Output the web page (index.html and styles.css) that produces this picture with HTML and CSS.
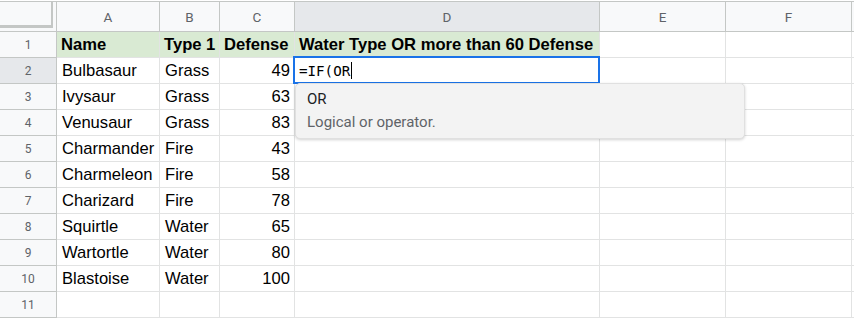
FILE: index.html
```html
<!DOCTYPE html>
<html>
<head>
<meta charset="utf-8">
<link rel="stylesheet" href="styles.css">
</head>
<body>
<div class="sheet">
  <div class="row head-row">
    <div class="corner"><span class="freeze-h"></span><span class="freeze-v"></span></div>
    <div class="colhead">A</div>
    <div class="colhead">B</div>
    <div class="colhead">C</div>
    <div class="colhead sel">D</div>
    <div class="colhead">E</div>
    <div class="colhead">F</div>
    <div class="colhead rest"></div>
  </div>
  <div class="row">
    <div class="rowhead">1</div>
    <div class="cell th">Name</div>
    <div class="cell th">Type 1</div>
    <div class="cell th">Defense</div>
    <div class="cell th">Water Type OR more than 60 Defense</div>
    <div class="cell"></div><div class="cell"></div><div class="cell rest"></div>
  </div>
  <div class="row">
    <div class="rowhead sel">2</div>
    <div class="cell">Bulbasaur</div>
    <div class="cell">Grass</div>
    <div class="cell num">49</div>
    <div class="cell active">
      <span class="formula">=IF(OR<span class="caret"></span></span>
      <div class="suggest">
        <div class="sg-name">OR</div>
        <div class="sg-desc">Logical or operator.</div>
      </div>
    </div>
    <div class="cell"></div><div class="cell"></div><div class="cell rest"></div>
  </div>
  <div class="row">
    <div class="rowhead">3</div>
    <div class="cell">Ivysaur</div><div class="cell">Grass</div><div class="cell num">63</div>
    <div class="cell"></div><div class="cell"></div><div class="cell"></div><div class="cell rest"></div>
  </div>
  <div class="row">
    <div class="rowhead">4</div>
    <div class="cell">Venusaur</div><div class="cell">Grass</div><div class="cell num">83</div>
    <div class="cell"></div><div class="cell"></div><div class="cell"></div><div class="cell rest"></div>
  </div>
  <div class="row">
    <div class="rowhead">5</div>
    <div class="cell">Charmander</div><div class="cell">Fire</div><div class="cell num">43</div>
    <div class="cell"></div><div class="cell"></div><div class="cell"></div><div class="cell rest"></div>
  </div>
  <div class="row">
    <div class="rowhead">6</div>
    <div class="cell">Charmeleon</div><div class="cell">Fire</div><div class="cell num">58</div>
    <div class="cell"></div><div class="cell"></div><div class="cell"></div><div class="cell rest"></div>
  </div>
  <div class="row">
    <div class="rowhead">7</div>
    <div class="cell">Charizard</div><div class="cell">Fire</div><div class="cell num">78</div>
    <div class="cell"></div><div class="cell"></div><div class="cell"></div><div class="cell rest"></div>
  </div>
  <div class="row">
    <div class="rowhead">8</div>
    <div class="cell">Squirtle</div><div class="cell">Water</div><div class="cell num">65</div>
    <div class="cell"></div><div class="cell"></div><div class="cell"></div><div class="cell rest"></div>
  </div>
  <div class="row">
    <div class="rowhead">9</div>
    <div class="cell">Wartortle</div><div class="cell">Water</div><div class="cell num">80</div>
    <div class="cell"></div><div class="cell"></div><div class="cell"></div><div class="cell rest"></div>
  </div>
  <div class="row">
    <div class="rowhead">10</div>
    <div class="cell">Blastoise</div><div class="cell">Water</div><div class="cell num">100</div>
    <div class="cell"></div><div class="cell"></div><div class="cell"></div><div class="cell rest"></div>
  </div>
  <div class="row">
    <div class="rowhead">11</div>
    <div class="cell"></div><div class="cell"></div><div class="cell"></div>
    <div class="cell"></div><div class="cell"></div><div class="cell"></div><div class="cell rest"></div>
  </div>
</div>
</body>
</html>
```

FILE: styles.css
```css
html, body {
  margin: 0;
  padding: 0;
  background: #ffffff;
}
body {
  font-family: "Liberation Sans", Arial, sans-serif;
  overflow: hidden;
}
.sheet {
  padding-top: 1px;
  width: 854px;
}
.row {
  display: grid;
  grid-template-columns: 57px 103px 60px 75px 305px 126px 126px 2px;
  height: 26px;
}
.head-row {
  height: 30px;
  border-top: 1px solid #c4c7c5;
}
.corner {
  position: relative;
  background: #f8f9fa;
  border-right: 1px solid #c4c7c5;
  border-bottom: 1px solid #c4c7c5;
}
.freeze-h {
  position: absolute;
  left: 0;
  right: 4px;
  top: 23px;
  height: 3px;
  background: #c4c7c5;
}
.freeze-v {
  position: absolute;
  top: 0;
  right: 3px;
  width: 2px;
  height: 26px;
  background: #c4c7c5;
}
.colhead {
  background: #f8f9fa;
  border-right: 1px solid #c4c7c5;
  border-bottom: 1px solid #c4c7c5;
  display: flex;
  align-items: center;
  justify-content: center;
  font-family: Roboto, "Liberation Sans", sans-serif;
  font-size: 13.5px;
  color: #5f6368;
}
.colhead.sel {
  background: #e6e8eb;
}
.colhead.rest {
  border-right: none;
}
.rowhead {
  background: #f8f9fa;
  border-right: 1px solid #c4c7c5;
  border-bottom: 1px solid #c4c7c5;
  display: flex;
  align-items: center;
  justify-content: center;
  font-family: Roboto, "Liberation Sans", sans-serif;
  font-size: 12px;
  color: #5f6368;
}
.rowhead.sel {
  background: #e6e8eb;
}
.cell {
  border-right: 1px solid #e2e3e3;
  border-bottom: 1px solid #e2e3e3;
  display: flex;
  align-items: center;
  padding: 0 5px;
  font-size: 16.6px;
  color: #000;
  white-space: nowrap;
  min-width: 0;
}
.cell.rest {
  border-right: none;
  padding: 0;
}
.cell.th {
  background: #d9ead3;
  font-weight: bold;
  padding-left: 4px;
}
.cell.num {
  justify-content: flex-end;
  padding-right: 4px;
}
.cell.active {
  position: relative;
  overflow: visible;
  z-index: 2;
}
.cell.active::before {
  content: "";
  position: absolute;
  left: -2px;
  top: -2px;
  right: -1px;
  bottom: -1px;
  border: 2px solid #1a73e8;
  pointer-events: none;
}
.formula {
  font-family: "DejaVu Sans Mono", "Liberation Mono", monospace;
  font-size: 14.2px;
  display: flex;
  align-items: center;
  margin-left: -1px;
}
.caret {
  display: inline-block;
  width: 1px;
  height: 17px;
  background: #000;
  margin-left: 1px;
}
.suggest {
  position: absolute;
  left: 0;
  top: 25px;
  width: 450px;
  height: 56px;
  box-sizing: border-box;
  background: #f3f3f3;
  border: 1px solid #e0e0e0;
  border-radius: 5px;
  box-shadow: 0 1px 3px rgba(0, 0, 0, 0.18);
  padding: 4px 0 0 11px;
  font-family: Roboto, "Liberation Sans", sans-serif;
  font-size: 15px;
}
.sg-name {
  color: #202124;
  height: 23px;
  line-height: 23px;
}
.sg-desc {
  color: #5f6368;
  height: 23px;
  line-height: 23px;
}
```
